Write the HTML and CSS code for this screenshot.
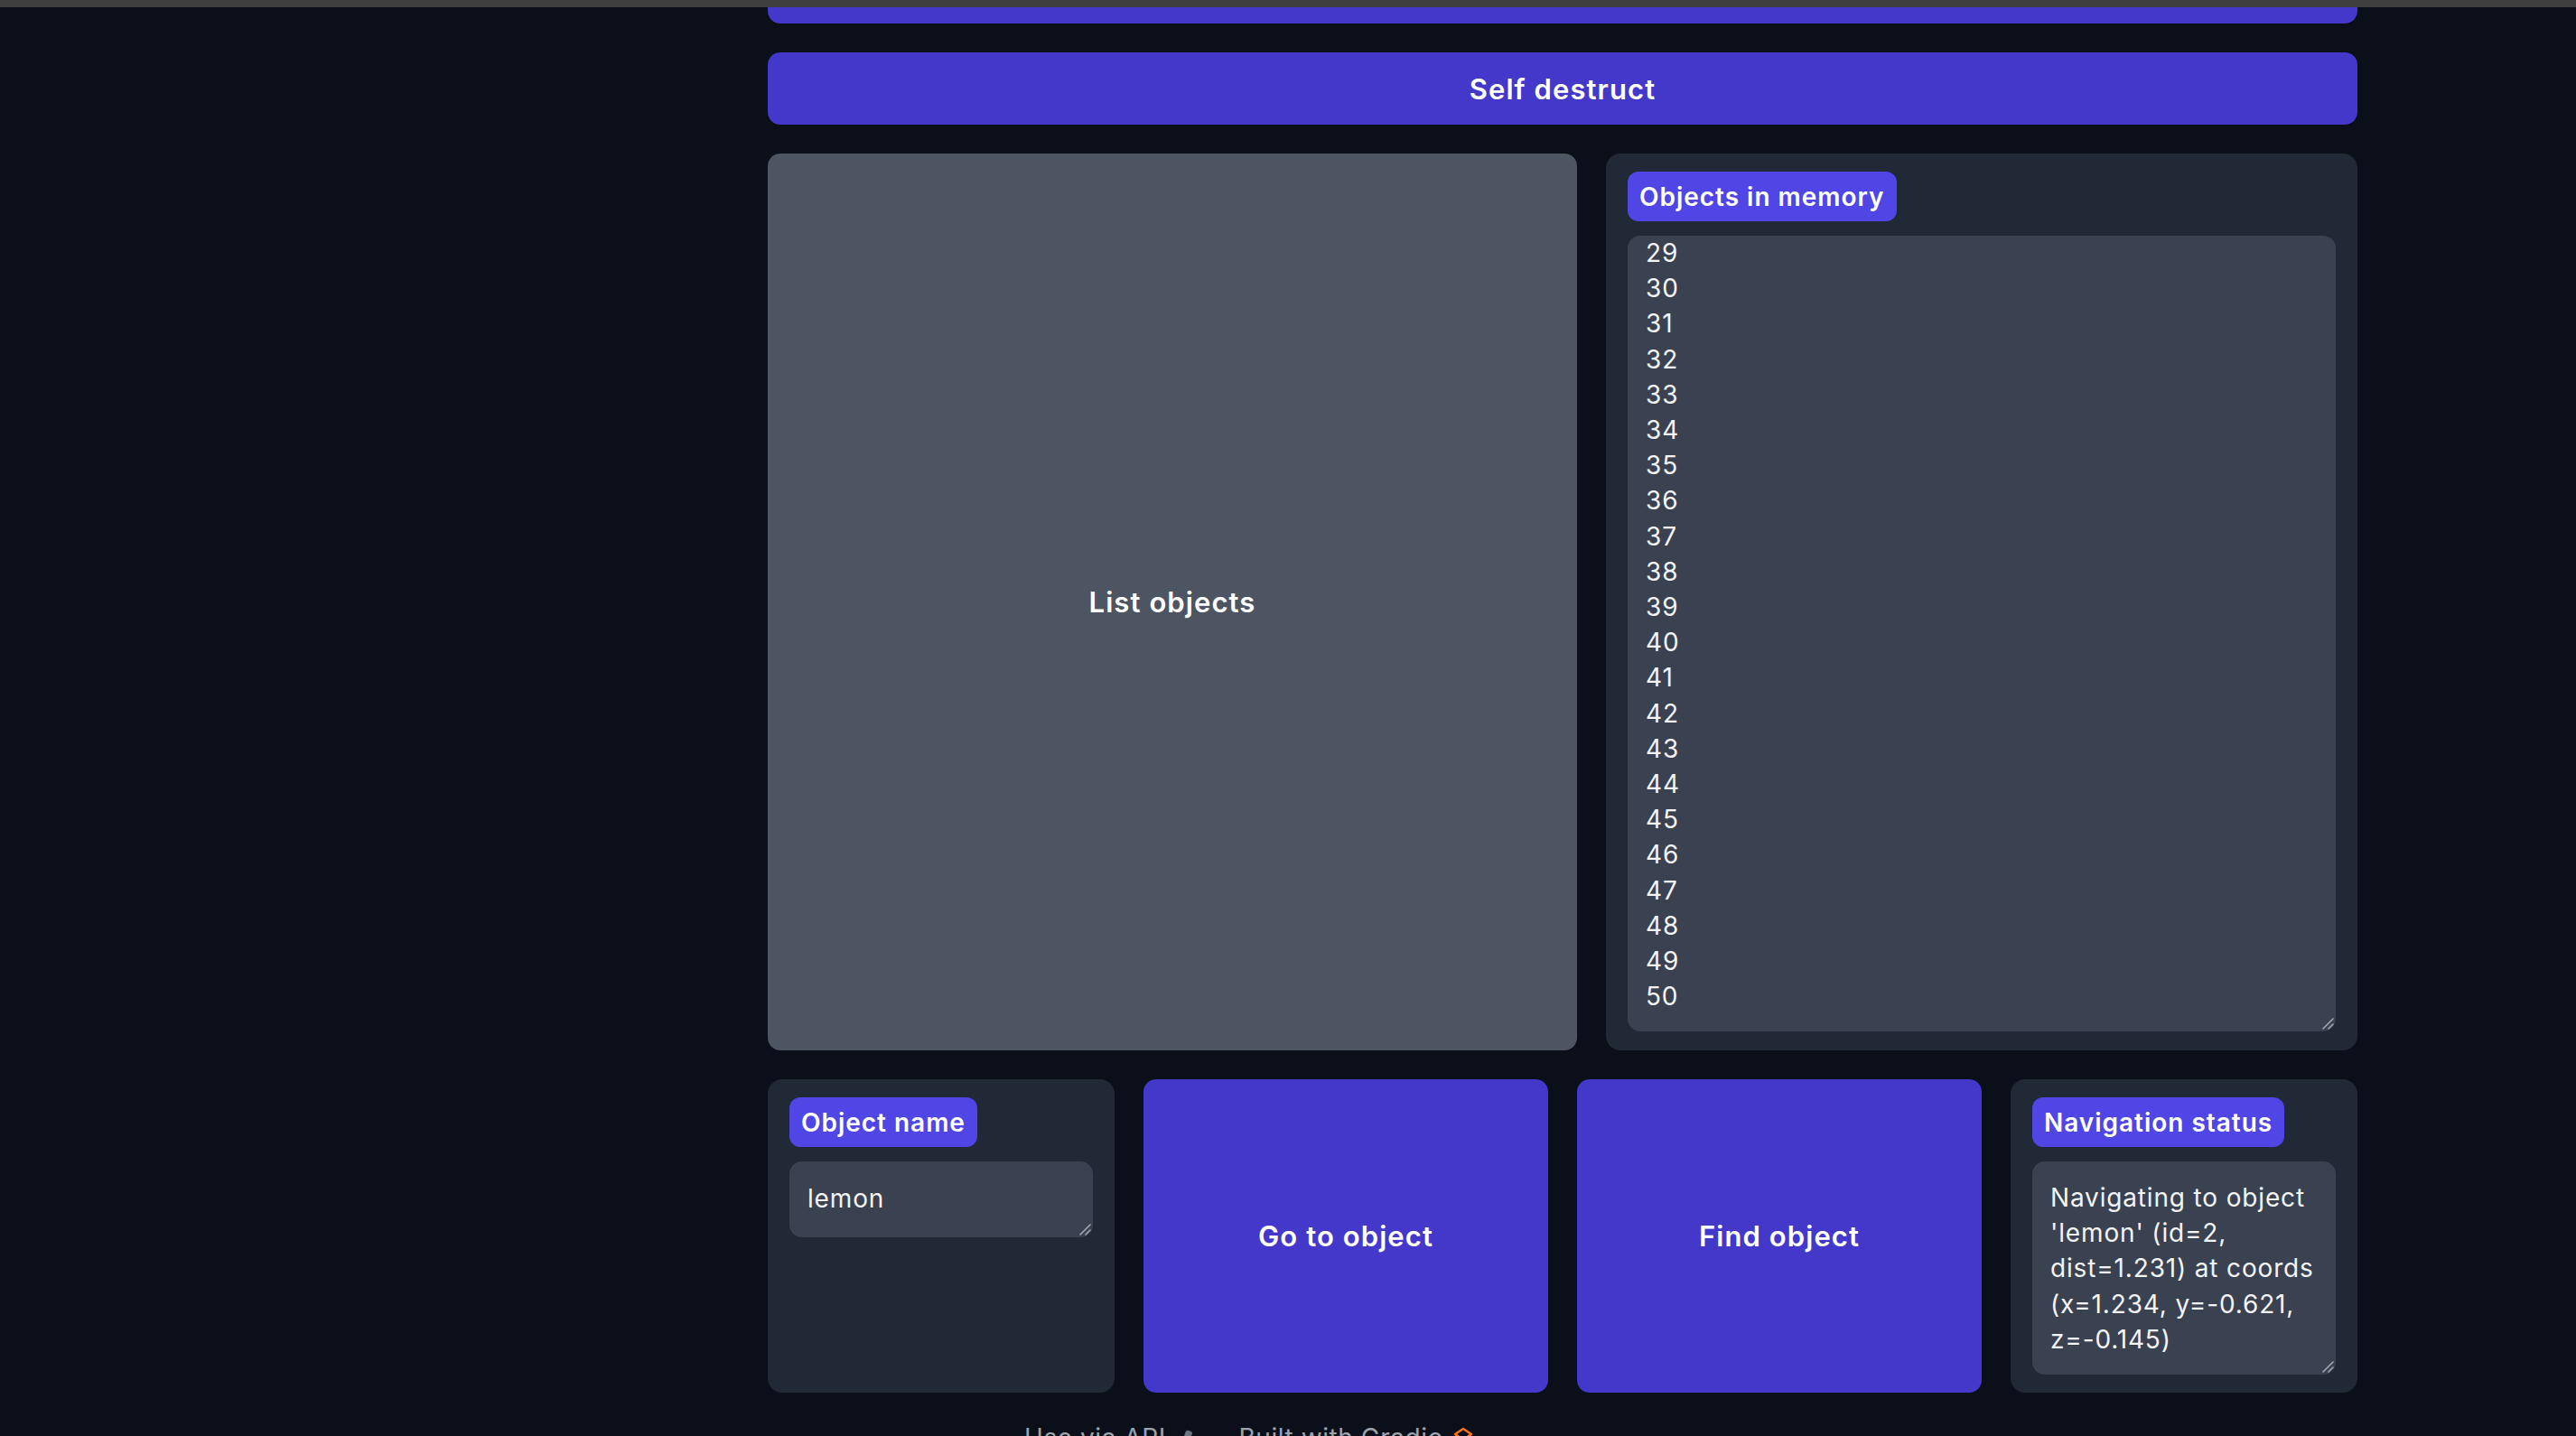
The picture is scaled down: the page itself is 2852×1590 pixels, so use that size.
FILE: index.html
```html
<!DOCTYPE html>
<html lang="en">
<head>
<meta charset="utf-8">
<title>Navigation</title>
<link rel="stylesheet" href="styles.css">
</head>
<body>
<div class="topbar"></div>
<main class="app">
  <button class="btn primary cut"></button>
  <button class="btn primary destruct">Self destruct</button>
  <div class="row row-main">
    <button class="btn secondary">List objects</button>
    <div class="block">
      <span class="label">Objects in memory</span>
      <div class="field-wrap grow">
        <textarea class="field mem-field" readonly>29
30
31
32
33
34
35
36
37
38
39
40
41
42
43
44
45
46
47
48
49
50</textarea>
        <svg class="grip" viewBox="0 0 14 14" width="14" height="14"><path d="M13 2L2 13M13 8L8 13" stroke="#a3a7ae" stroke-width="1.6" stroke-linecap="round"/></svg>
      </div>
    </div>
  </div>
  <div class="row row-nav">
    <div class="block">
      <span class="label">Object name</span>
      <div class="field-wrap">
        <textarea class="field name-field" rows="1">lemon</textarea>
        <svg class="grip" viewBox="0 0 14 14" width="14" height="14"><path d="M13 2L2 13M13 8L8 13" stroke="#a3a7ae" stroke-width="1.6" stroke-linecap="round"/></svg>
      </div>
    </div>
    <button class="btn primary">Go to object</button>
    <button class="btn primary">Find object</button>
    <div class="block">
      <span class="label">Navigation status</span>
      <div class="field-wrap grow">
        <textarea class="field status-field" readonly>Navigating to object
'lemon' (id=2,
dist=1.231) at coords
(x=1.234, y=-0.621,
z=-0.145)</textarea>
        <svg class="grip" viewBox="0 0 14 14" width="14" height="14"><path d="M13 2L2 13M13 8L8 13" stroke="#a3a7ae" stroke-width="1.6" stroke-linecap="round"/></svg>
      </div>
    </div>
  </div>
  <footer class="footer">
    <span class="foot-link">Use via API</span>
    <svg class="foot-icon" viewBox="0 0 24 24" width="22" height="22"><path d="M14 3c3.5 0 6 1.5 7 3-1 4-4 8-8 10l-3-3c2-4 1-7 4-10z" fill="#6b7280"/><path d="M9 14l-4 4" stroke="#6b7280" stroke-width="2"/></svg>
    <span class="dot">·</span>
    <span class="foot-link">Built with Gradio</span>
    <svg class="foot-icon" viewBox="0 0 24 24" width="24" height="24"><path d="M12 2l9 6-9 6-9-6z" fill="none" stroke="#f97316" stroke-width="2.5" stroke-linejoin="round"/><path d="M3 14l9 6 9-6" fill="none" stroke="#fb923c" stroke-width="2.5" stroke-linejoin="round"/></svg>
  </footer>
</main>
</body>
</html>
```
FILE: styles.css
```css
* { box-sizing: border-box; }

html, body {
  margin: 0;
  height: 100%;
  overflow: hidden;
  background: #0b0f19;
}

body {
  font-family: Inter, "Noto Sans", sans-serif;
  color: #f3f4f6;
  color-scheme: dark;
}

.topbar {
  position: fixed;
  top: 0;
  left: 0;
  right: 0;
  height: 8px;
  background: #3f3f3f;
  z-index: 10;
}

.app {
  display: flex;
  flex-direction: column;
  gap: 32px;
  width: 1760px;
  margin: -54px 0 0 850px;
}

.btn {
  border: none;
  border-radius: 14px;
  font-family: inherit;
  font-weight: 600;
  font-size: 31px;
  letter-spacing: 0.035em;
  color: #ffffff;
  cursor: pointer;
  padding: 0;
}

.primary { background: #4338ca; }
.secondary { background: #4d5563; }

.cut { height: 80px; }
.destruct { height: 80px; }

.row {
  display: grid;
  gap: 32px;
}

.row-main {
  grid-template-columns: 896px 832px;
  height: 993px;
}

.row-nav {
  grid-template-columns: 384px 448px 448px 384px;
  height: 347px;
}

.block {
  background: #212836;
  border-radius: 16px;
  padding: 20px 24px 20px;
  display: flex;
  flex-direction: column;
  align-items: flex-start;
  gap: 16px;
}

.row-main .block { padding-bottom: 21px; }

.label {
  display: inline-flex;
  align-items: center;
  height: 55px;
  padding: 0 13px;
  background: #4f46e5;
  border-radius: 12px;
  font-size: 28px;
  font-weight: 600;
  letter-spacing: 0.035em;
  color: #ffffff;
}

.field-wrap {
  position: relative;
  align-self: stretch;
  display: flex;
  flex-direction: column;
}

.field-wrap.grow { flex: 1; }

.grip {
  position: absolute;
  right: 2px;
  bottom: 2px;
  pointer-events: none;
}

.field {
  flex: 1;
  width: 100%;
  margin: 0;
  border: none;
  outline: none;
  border-radius: 14px;
  background: #3a4151;
  color: #f3f4f6;
  font-family: inherit;
  font-size: 28px;
  line-height: 39.2px;
  letter-spacing: 0.03em;
  resize: none;
  overflow: hidden;
  white-space: pre;
}

.mem-field {
  padding: 0 20px 20px;
}

.name-field {
  flex: none;
  height: 84px;
  padding: 22px 20px;
}

.status-field {
  padding: 21px 20px 18px;
}

.footer {
  display: flex;
  align-items: center;
  gap: 10px;
  margin: -3px 0 0 284px;
  font-size: 28px;
  line-height: 42px;
  color: #9ca3af;
  letter-spacing: 0.02em;
}

.dot { margin: 0 10px; }
```
